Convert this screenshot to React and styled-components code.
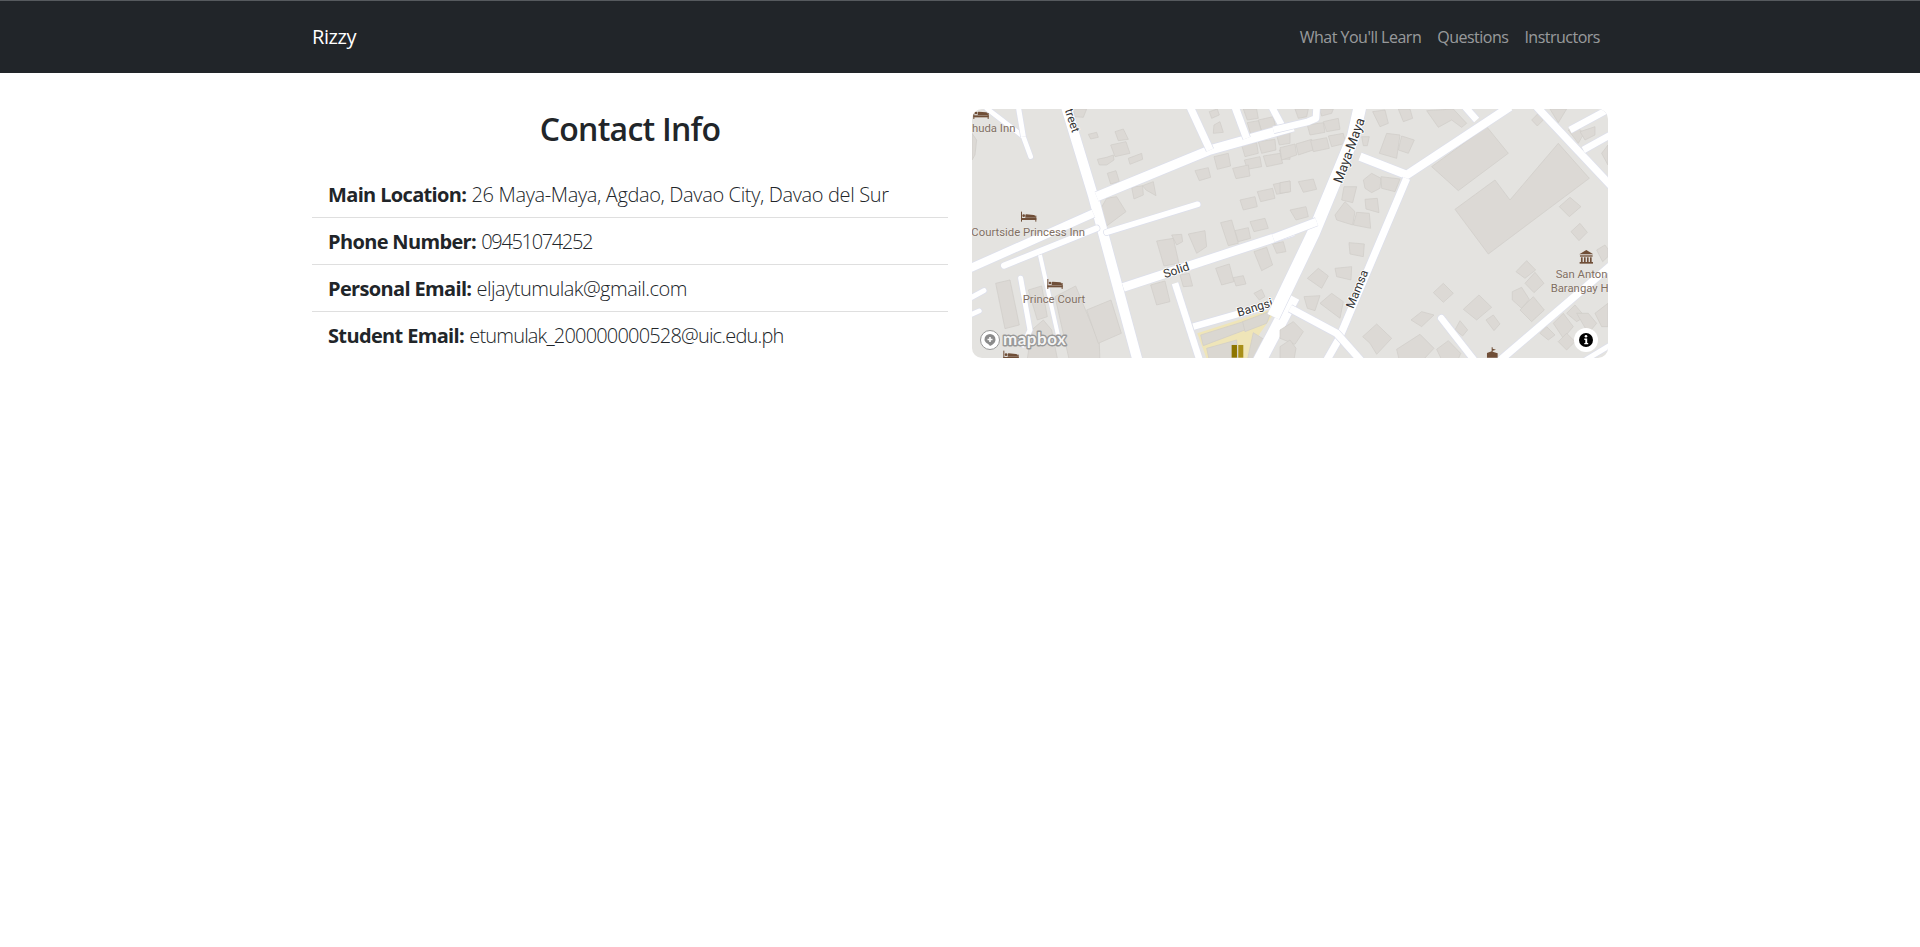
import React from "react";
import styled, { createGlobalStyle } from "styled-components";

const GlobalStyle = createGlobalStyle`
  body {
    margin: 0;
    background: #fff;
    color: #212529;
    font-family: "Open Sans", "Liberation Sans", sans-serif;
  }
`;

const links = [
  { label: "What You'll Learn" },
  { label: "Questions" },
  { label: "Instructors" },
];

const contacts = [
  { label: "Main Location:", value: "26 Maya-Maya, Agdao, Davao City, Davao del Sur", tracking: -0.36 },
  { label: "Phone Number:", value: "09451074252", tracking: -1.35 },
  { label: "Personal Email:", value: "eljaytumulak@gmail.com", tracking: -0.52 },
  { label: "Student Email:", value: "etumulak_200000000528@uic.edu.ph", tracking: -0.82 },
];

// map data is in reference crop coordinates, west and east tile of the map
const westBuildings = [
  "340,27 380,27 370,52 345,50", "385,103 410,97 415,112 392,117", "465,95 490,87 505,118 475,122",
  "452,135 498,125 510,160 465,170", "412,178 440,172 460,165 462,180 440,195 418,195", "505,175 545,160 548,178 510,193",
  "442,220 468,212 478,245 452,252", "515,262 548,257 550,285 522,297", "548,257 580,245 588,287 558,270",
  "705,212 745,203 752,232 718,242", "748,35 772,27 778,45 755,55", "762,75 780,65 790,97 760,100",
  "762,170 805,160 812,198 772,208", "845,135 890,128 895,160 855,170", "895,125 945,118 948,150 905,160",
  "958,150 990,143 990,178 968,178", "853,180 900,170 905,200 862,208", "910,168 960,160 968,190 920,200",
  "818,205 865,195 870,228 828,236", "840,300 885,290 892,320 850,330", "892,275 938,265 945,295 902,305",
  "940,253 990,243 990,275 950,283", "850,27 890,27 895,55 862,60", "895,60 940,50 948,85 905,95",
  "862,68 895,62 905,95 872,102", "950,105 990,95 990,130 958,135", "420,330 440,295 470,290 498,335 440,378",
  "590,423 640,415 657,490 612,498", "635,405 665,403 668,425 650,435", "685,402 735,392 740,440 710,460",
  "782,368 815,360 835,430 805,437", "825,392 865,383 872,415 835,425", "870,365 915,355 925,385 882,395",
  "938,432 970,425 978,455 950,460", "882,455 920,442 938,495 905,512", "767,505 808,492 822,545 785,555",
  "820,533 850,527 858,552 828,558", "882,580 905,568 915,590 898,600", "660,525 688,520 698,558 670,560",
  "572,555 615,543 630,605 590,615", "107,550 150,540 178,675 135,686", "205,570 245,558 262,650 232,660",
  "285,590 347,558 418,730 420,790 330,790", "380,630 453,600 484,700 415,730", "215,690 250,660 275,690 295,790 200,790",
  "36,100 50,120 45,165 36,180",
];

const eastBuildings = [
  "0,248 30,243 32,275 0,280", "55,245 100,237 110,268 70,277", "30,330 78,320 85,350 48,360",
  "0,143 45,132 50,165 5,180", "48,132 95,118 100,150 55,165", "92,122 140,113 148,145 100,155",
  "145,108 190,100 197,130 155,140", "82,75 130,68 135,97 90,105", "130,65 175,55 180,88 140,95",
  "45,27 85,27 80,50 55,55", "118,27 160,27 155,40 125,48", "278,35 315,30 325,70 300,80",
  "355,27 390,27 398,55 370,65", "320,100 360,105 350,175 298,160", "365,108 403,120 385,160 355,150",
  "440,32 520,27 560,70 545,82 515,60 475,82", "620,80 685,160 535,272 455,200",
  "525,328 645,240 690,300 805,165 835,130 928,235 625,462", "838,320 870,292 903,320 868,350",
  "873,395 900,370 922,397 897,422", "950,450 975,435 984,447 984,470 968,485", "708,515 740,482 767,510 735,535",
  "735,550 765,517 792,550 762,578", "697,575 725,562 748,598 725,625 697,600", "720,630 760,590 793,630 755,665",
  "460,578 490,550 520,580 490,607", "550,628 597,585 635,622 590,660", "618,660 640,645 660,672 642,692",
  "393,660 425,635 462,645 425,680", "525,690 540,662 563,690 548,708", "248,710 290,672 335,715 290,763 270,730",
  "350,748 420,703 462,745 420,790 360,790", "470,748 505,722 542,760 530,790 490,790", "0,690 40,665 70,695 45,733 0,715",
  "0,740 30,720 48,745 40,790 0,790", "72,590 120,587 105,632 82,625", "120,610 155,580 190,605 180,655",
  "82,535 115,505 145,528 125,565", "165,505 215,500 213,540 170,530", "207,428 253,432 250,470 210,462",
  "255,298 292,295 297,338 258,327", "192,260 230,260 218,308 185,300", "165,345 195,305 225,335 218,375 170,360",
  "220,375 230,337 268,340 272,385", "250,240 275,220 303,235 300,265 275,278 255,265", "303,230 360,237 345,275 305,265",
  "245,110 268,110 262,137 250,137", "755,60 775,40 790,60 772,78", "810,27 860,27 835,68",
  "865,90 890,80 912,100 895,130", "900,95 945,80 945,105 915,120", "965,160 984,135 984,195",
  "780,700 800,680 825,705 805,720", "820,670 850,640 880,680 850,715", "860,640 885,615 915,650 890,665",
  "890,640 925,640 950,670 925,700", "945,640 984,610 984,680 965,680", "835,725 860,700 885,725 860,750",
];

const schoolBuildings = [
  "722,705 850,665 855,690 730,737", "848,665 935,632 920,670 855,695",
  "740,745 830,720 835,790 750,790", "860,790 880,698 915,720 900,790",
];

const westRoads = [
  { points: "318,20 400,290 535,790", width: 30 },
  { points: "410,290 750,150 1000,80", width: 28 },
  { points: "30,505 400,340", width: 24 },
  { points: "132,497 410,385", width: 18, round: true },
  { points: "440,397 713,313", width: 17, round: true },
  { points: "490,562 1000,395", width: 26 },
  { points: "240,465 295,710", width: 12 },
  { points: "182,535 210,690 190,735", width: 15, round: true },
  { points: "645,550 722,790", width: 20 },
  { points: "700,680 945,610", width: 20 },
  { points: "30,595 72,572", width: 15, round: true },
  { points: "30,645 58,633", width: 14, round: true },
  { points: "80,25 190,110 212,170", width: 14, round: true },
  { points: "175,20 190,110", width: 15 },
  { points: "690,20 750,150", width: 22 },
  { points: "825,20 860,115", width: 22 },
  { points: "935,20 970,85", width: 20 },
  { points: "1000,590 895,790", width: 40 },
];

const eastRoads = [
  { points: "-20,90 85,65 108,55 110,20", width: 20 },
  { points: "240,20 220,110 100,400 -20,650", width: 38 },
  { points: "-20,415 110,365", width: 24 },
  { points: "240,170 380,225 690,20", width: 25 },
  { points: "380,235 175,720 135,790", width: 22 },
  { points: "30,625 170,700 250,790", width: 22 },
  { points: "555,20 590,60", width: 20 },
  { points: "770,20 1000,265", width: 22 },
  { points: "870,90 1000,20", width: 20 },
  { points: "910,150 1000,100", width: 20 },
  { points: "484,655 590,790", width: 20, round: true },
  { points: "650,790 1000,490", width: 22 },
  { points: "900,790 1000,730", width: 15 },
];

const placeLabels = [
  { text: "huda Inn", x: 36, y: 96 },
  { text: "Courtside Princess Inn", x: 34, y: 408 },
  { text: "Prince Court", x: 188, y: 610 },
];

const roadLabels = [
  { text: "treet", x: 314, y: 30, angle: 72 },
  { text: "Solid", x: 615, y: 535, angle: -19 },
  { text: "Bangsi", x: 836, y: 650, angle: -17 },
];

const beds = [
  { x: 40, y: 27 }, { x: 183, y: 335 }, { x: 262, y: 537 }, { x: 130, y: 752 },
];

const Navbar = styled.nav`
  height: 72px;
  border-top: 1px solid #565a5e;
  background: #212529;
`;

const NavInner = styled.div`
  box-sizing: border-box;
  width: 1320px;
  height: 100%;
  margin: 0 auto;
  padding: 0 12px;
  display: flex;
  align-items: center;
  justify-content: space-between;
`;

const Brand = styled.a`
  color: #fff;
  font-size: 20px;
  line-height: 30px;
  letter-spacing: -0.4px;
`;

const NavLinks = styled.div`
  display: flex;
`;

const NavLink = styled.a`
  padding: 8px;
  color: rgba(255, 255, 255, 0.55);
  font-size: 16px;
  line-height: 24px;
  letter-spacing: -0.5px;
`;

const Main = styled.main`
  box-sizing: border-box;
  width: 1320px;
  margin: 0 auto;
  padding: 36px 12px 0;
  display: grid;
  grid-template-columns: 1fr 1fr;
  column-gap: 24px;
`;

const Heading = styled.h2`
  margin: 0 0 23px;
  padding-top: 1px;
  text-align: center;
  font-size: 32px;
  font-weight: 600;
  line-height: 38px;
  letter-spacing: -0.75px;
`;

const ContactList = styled.ul`
  margin: 0;
  padding: 0;
  list-style: none;
`;

const ContactItem = styled.li`
  padding: 9px 16px 7px;
  font-size: 20px;
  line-height: 30px;
  font-weight: 300;
  white-space: nowrap;
  border-bottom: 1px solid rgba(0, 0, 0, 0.125);

  &:last-child {
    border-bottom: 0;
  }
`;

const ContactLabel = styled.strong`
  font-weight: 700;
  letter-spacing: -0.65px;
`;

const ContactValue = styled.span`
  letter-spacing: ${(p) => p.$tracking}px;
`;

const MapFrame = styled.div`
  position: relative;
  height: 249px;
  overflow: hidden;
  border-radius: 10px;
  background: #e4e3e0;
`;

const MapCanvas = styled.svg`
  display: block;
  width: 636px;
  height: 249px;
`;

const Building = styled.polygon`
  fill: ${(p) => (p.$school ? "#dad7d1" : "#dcd9d5")};
  stroke: #cfccc7;
  stroke-width: 2;
`;

const RoadLine = styled.polyline`
  fill: none;
  stroke: ${(p) => (p.$casing ? "#dcdfec" : "#fff")};
  stroke-linecap: ${(p) => (p.$round ? "round" : "butt")};
  stroke-linejoin: round;
`;

const PlaceLabel = styled.text`
  fill: #806e62;
  font-family: Roboto, "Noto Sans", sans-serif;
  font-size: 34px;
  stroke: #fff;
  stroke-width: 2;
  stroke-opacity: 0.5;
  paint-order: stroke;
`;

const RoadLabel = styled.text`
  fill: #333;
  font-family: Roboto, "Noto Sans", sans-serif;
  font-size: ${(p) => p.$size || 36}px;
  stroke: #fff;
  stroke-width: 5;
  paint-order: stroke;
`;

const MapboxLogo = styled.svg`
  position: absolute;
  left: 5px;
  bottom: 7px;
  width: 92px;
  height: 22px;
`;

const LogoWord = styled.text`
  fill: #f4f4f4;
  stroke: #989898;
  stroke-width: 2.8;
  stroke-linejoin: round;
  paint-order: stroke;
  font-family: Lato, "Open Sans", sans-serif;
  font-size: 17px;
  font-weight: 700;
  letter-spacing: 0.5px;
`;

const InfoButton = styled.svg`
  position: absolute;
  right: 10px;
  bottom: 6px;
  width: 24px;
  height: 24px;
`;

function Road({ road }) {
  return (
    <>
      <RoadLine points={road.points} strokeWidth={road.width + 4} $casing $round={road.round} />
      <RoadLine points={road.points} strokeWidth={road.width} $round={road.round} />
    </>
  );
}

function BedIcon({ x, y }) {
  return (
    <g transform={`translate(${x} ${y})`} fill="#6f4e37">
      <rect x="0" y="0" width="3" height="30" />
      <rect x="43" y="12" width="3" height="18" />
      <rect x="0" y="19" width="46" height="6" />
      <path d="M13 18v-7c0-2 1-3 3-3l22 2c4 0 6 3 6 8z" />
      <circle cx="8" cy="12" r="4" />
    </g>
  );
}

function MapDrawing() {
  return (
    <MapCanvas viewBox="0 0 636 249">
      <g transform="translate(-12 -9) scale(0.3333)">
        <polygon points="712,700 945,625 935,650 900,700 860,790 745,790" fill="#efe5b8" />
        {westBuildings.map((points) => <Building key={points} points={points} />)}
        {schoolBuildings.map((points) => <Building key={points} points={points} $school />)}
        {westRoads.map((road) => <Road key={road.points} road={road} />)}
        <rect x="815" y="735" width="16" height="38" fill="#8d7500" />
        <rect x="835" y="735" width="15" height="38" fill="#a88f18" />
        {beds.map((bed) => <BedIcon key={bed.x} x={bed.x} y={bed.y} />)}
        {placeLabels.map((label) => (
          <PlaceLabel key={label.text} x={label.x} y={label.y}>{label.text}</PlaceLabel>
        ))}
        {roadLabels.map((label) => (
          <RoadLabel key={label.text} x={label.x} y={label.y} transform={`rotate(${label.angle} ${label.x} ${label.y})`}>
            {label.text}
          </RoadLabel>
        ))}
      </g>
      <g transform="translate(308 -9) scale(0.3333)">
        {eastBuildings.map((points) => <Building key={points} points={points} />)}
        {eastRoads.map((road) => <Road key={road.points} road={road} />)}
        <RoadLabel x="185" y="252" $size="40" transform="rotate(-70 185 252)">Maya-Maya</RoadLabel>
        <RoadLabel x="220" y="628" transform="rotate(-68 220 628)">Mamsa</RoadLabel>
        <g fill="#6f4e37">
          <path d="M919 450l21 13h-42z" />
          <rect x="900" y="466" width="38" height="4" />
          <rect x="903" y="472" width="5" height="14" />
          <rect x="912" y="472" width="5" height="14" />
          <rect x="921" y="472" width="5" height="14" />
          <rect x="930" y="472" width="5" height="14" />
          <rect x="899" y="486" width="40" height="5" />
        </g>
        <PlaceLabel x="827" y="533">San Anton</PlaceLabel>
        <PlaceLabel x="812" y="577">Barangay H</PlaceLabel>
        <path d="M621 773v-14l14-5v-12h3v4l10 3-10 3v3l15 5v13z" fill="#6f4e37" />
      </g>
    </MapCanvas>
  );
}

function App() {
  return (
    <>
      <GlobalStyle />
      <Navbar>
        <NavInner>
          <Brand>Rizzy</Brand>
          <NavLinks>
            {links.map((link) => <NavLink key={link.label}>{link.label}</NavLink>)}
          </NavLinks>
        </NavInner>
      </Navbar>
      <Main>
        <section>
          <Heading>Contact Info</Heading>
          <ContactList>
            {contacts.map((contact) => (
              <ContactItem key={contact.label}>
                <ContactLabel>{contact.label}</ContactLabel>{" "}
                <ContactValue $tracking={contact.tracking}>{contact.value}</ContactValue>
              </ContactItem>
            ))}
          </ContactList>
        </section>
        <MapFrame>
          <MapDrawing />
          <MapboxLogo viewBox="0 0 92 22">
            <circle cx="13" cy="11" r="9.5" fill="#fff" stroke="#989898" strokeWidth="1" />
            <path d="M13 5a5.5 5.5 0 0 1 5.5 5.5c0 3.2-2.7 5.4-5.5 6.5-1-2.2-5.5-3.2-5.5-6.5A5.5 5.5 0 0 1 13 5z" fill="#8b8b8b" />
            <path d="M13 8v5M10.5 10.5h5" stroke="#fff" strokeWidth="1.6" />
            <LogoWord x="26" y="16">mapbox</LogoWord>
          </MapboxLogo>
          <InfoButton viewBox="0 0 24 24">
            <circle cx="12" cy="12" r="12" fill="#fff" />
            <circle cx="12" cy="12" r="7" fill="#000" />
            <circle cx="12" cy="8.3" r="1.3" fill="#fff" />
            <path d="M10.3 10.6h2.9v4.4h1v1.3h-3.9V15h1v-3.1h-1z" fill="#fff" />
          </InfoButton>
        </MapFrame>
      </Main>
    </>
  );
}

export default App;
